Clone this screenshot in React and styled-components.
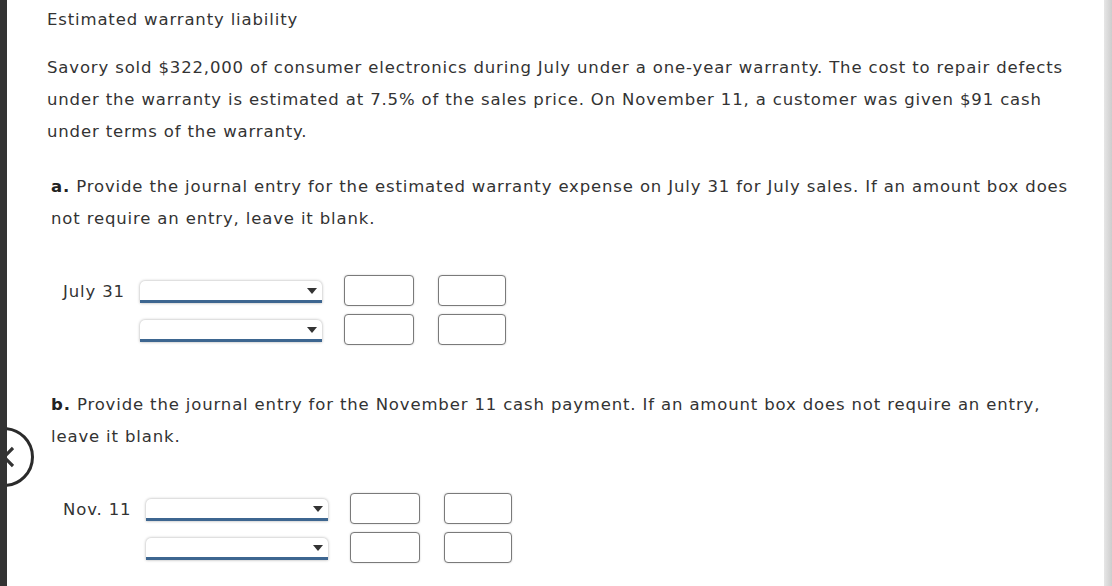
import React from 'react'
import styled, { createGlobalStyle } from 'styled-components'

const GlobalStyle = createGlobalStyle`
  html, body {
    margin: 0;
    padding: 0;
    background: #fff;
  }
  body {
    font-family: "DejaVu Sans", Verdana, sans-serif;
    color: #333;
  }
`

const Page = styled.div`
  position: relative;
  display: flex;
  width: 1112px;
  height: 586px;
  overflow: hidden;
  border-left: 7px solid #333;
  box-sizing: border-box;
`

const Content = styled.main`
  flex: 1;
  padding: 4px 0 0 40px;
  font-size: 16.5px;
  letter-spacing: 0.85px;
  line-height: 32px;
`

const Scrollbar = styled.div`
  width: 8px;
  background: linear-gradient(to right, #e6e6e6, #cdcdcd);
`

const Title = styled.h1`
  margin: 0 0 16px;
  font-size: inherit;
  font-weight: normal;
  line-height: 32px;
`

const Text = styled.p`
  margin: 0;
  white-space: nowrap;
  padding-left: ${(p) => (p.$indent ? '4px' : '0')};
  margin-top: ${(p) => p.$top || 0}px;
`

const Part = styled.b`
  color: #222;
`

const Entry = styled.div`
  display: grid;
  grid-template-columns: auto 182px 70px 70px;
  justify-content: start;
  column-gap: 22px;
  row-gap: 8px;
  align-items: center;
  margin: ${(p) => p.$top}px 0 0 4px;
  padding-left: 12px;
`

const Label = styled.span`
  grid-column: 1;
  margin-right: -7px;
  line-height: 20px;
  padding-top: 3px;
`

const Select = styled.div`
  grid-column: 2;
  position: relative;
  height: 19px;
  background: #fff;
  border-radius: 5px 5px 0 0;
  box-shadow: 0 0 3px rgba(0, 0, 0, 0.35);
  border-bottom: 3px solid #3d6690;
  margin-top: 2px;

  &::after {
    content: '';
    position: absolute;
    right: 5px;
    top: 7px;
    border-left: 5px solid transparent;
    border-right: 5px solid transparent;
    border-top: 6px solid #333;
  }
`

const Amount = styled.div`
  height: 29px;
  border: 1px solid #7a7a7a;
  border-radius: 4px;
  background: #fff;
  box-shadow: 0 0 2px rgba(0, 0, 0, 0.2);
  margin-left: ${(p) => (p.$second ? '2px' : '0')};
`

const BackButton = styled.button`
  position: absolute;
  z-index: 2;
  left: -33px;
  top: 427px;
  width: 60px;
  height: 60px;
  border: 3px solid #2b2b2b;
  border-radius: 50%;
  background: #fff;
  padding: 0 17px 0 0;
  display: flex;
  align-items: center;
  justify-content: flex-end;
  box-sizing: border-box;

  svg {
    flex: none;
  }
`

function EntryRow({ label }) {
  return (
    <>
      <Label>{label}</Label>
      <Select />
      <Amount />
      <Amount $second />
    </>
  )
}

function JournalEntry({ date, top }) {
  return (
    <Entry $top={top}>
      <EntryRow label={date} />
      <EntryRow label="" />
    </Entry>
  )
}

export default function App() {
  return (
    <>
      <GlobalStyle />
      <Page>
        <Content>
          <Title>Estimated warranty liability</Title>
          <Text>
            Savory sold $322,000 of consumer electronics during July under a one-year warranty. The cost to repair defects
            <br />
            under the warranty is estimated at 7.5% of the sales price. On November 11, a customer was given $91 cash
            <br />
            under terms of the warranty.
          </Text>
          <Text $indent $top={23}>
            <Part>a.</Part> Provide the journal entry for the estimated warranty expense on July 31 for July sales. If an amount box does
            <br />
            not require an entry, leave it blank.
          </Text>
          <JournalEntry date="July 31" top={40} />
          <Text $indent $top={44}>
            <Part>b.</Part> Provide the journal entry for the November 11 cash payment. If an amount box does not require an entry,
            <br />
            leave it blank.
          </Text>
          <JournalEntry date="Nov. 11" top={40} />
        </Content>
        <Scrollbar />
        <BackButton aria-label="Back">
          <svg width="12" height="22" viewBox="0 0 12 22">
            <path d="M11 2 L2 11 L11 20" fill="none" stroke="#333" strokeWidth="3.2" />
          </svg>
        </BackButton>
      </Page>
    </>
  )
}
